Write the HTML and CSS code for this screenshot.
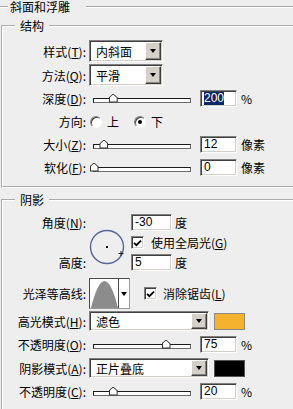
FILE: index.html
```html
<!DOCTYPE html>
<html lang="zh-CN">
<head>
  <meta charset="UTF-8" />
  <title>斜面和浮雕</title>
  <link rel="stylesheet" href="styles.css">
</head>
<body>
  <fieldset class="group outer">
    <legend>斜面和浮雕</legend>

    <fieldset class="group struct">
      <legend>结构</legend>
      <div class="row tall">
        <span class="lbl">样式(<u>T</u>):</span>
        <div class="select"><span>内斜面</span><i class="drop"></i></div>
      </div>
      <div class="row tall">
        <span class="lbl">方法(<u>Q</u>):</span>
        <div class="select"><span>平滑</span><i class="drop"></i></div>
      </div>
      <div class="row">
        <span class="lbl">深度(<u>D</u>):</span>
        <div class="slider"><div class="track"><i class="thumb" style="left: 20%"></i></div></div>
        <div class="field"><span class="hilite">200</span></div>
        <span class="unit">%</span>
      </div>
      <div class="row">
        <span class="lbl">方向:</span>
        <i class="radio"></i><span class="opt">上</span>
        <i class="radio on"></i><span class="opt">下</span>
      </div>
      <div class="row">
        <span class="lbl">大小(<u>Z</u>):</span>
        <div class="slider"><div class="track"><i class="thumb" style="left: 10.4%"></i></div></div>
        <div class="field">12</div>
        <span class="unit">像素</span>
      </div>
      <div class="row">
        <span class="lbl">软化(<u>F</u>):</span>
        <div class="slider"><div class="track"><i class="thumb" style="left: 0%"></i></div></div>
        <div class="field">0</div>
        <span class="unit">像素</span>
      </div>
    </fieldset>

    <fieldset class="group shade">
      <legend>阴影</legend>
      <div class="angle">
        <span class="lbl">角度(<u>N</u>):</span>
        <div class="cell"><div class="field num">-30</div><span class="deg">度</span></div>
        <svg class="dial" width="36" height="36" viewBox="0 0 36 36">
          <circle cx="18" cy="18" r="16.5" fill="none" stroke="#56659a" stroke-width="1.4"/>
          <rect x="17" y="17" width="2" height="2" fill="#000"/>
          <path d="M29.5 24.5h5M32 22v5" stroke="#222" stroke-width="1"/>
        </svg>
        <div class="cell">
          <i class="check"><svg width="9" height="8" viewBox="0 0 9 8"><path d="M1 3.8l2.4 2.4L8 1.6" fill="none" stroke="#000" stroke-width="1.8"/></svg></i>
          <span class="opt">使用全局光(<u>G</u>)</span>
        </div>
        <span class="lbl">高度:</span>
        <div class="cell"><div class="field num">5</div><span class="deg">度</span></div>
      </div>

      <div class="row gloss">
        <span class="lbl">光泽等高线:</span>
        <div class="contour">
          <svg width="28" height="29" viewBox="0 0 28 29"><path d="M1 29Q14.5 -25 28 29Z" fill="#8c8c8c"/></svg>
          <i class="arrow"></i>
        </div>
        <i class="check wide"><svg width="9" height="8" viewBox="0 0 9 8"><path d="M1 3.8l2.4 2.4L8 1.6" fill="none" stroke="#000" stroke-width="1.8"/></svg></i>
        <span class="opt">消除锯齿(<u>L</u>)</span>
      </div>
      <div class="row tall">
        <span class="lbl">高光模式(<u>H</u>):</span>
        <div class="select wide"><span>滤色</span><i class="drop"></i></div>
        <i class="swatch orange"></i>
      </div>
      <div class="row">
        <span class="lbl">不透明度(<u>O</u>):</span>
        <div class="slider"><div class="track"><i class="thumb" style="left: 75%"></i></div></div>
        <div class="field">75</div>
        <span class="unit">%</span>
      </div>
      <div class="row tall">
        <span class="lbl">阴影模式(<u>A</u>):</span>
        <div class="select wide"><span>正片叠底</span><i class="drop"></i></div>
        <i class="swatch black"></i>
      </div>
      <div class="row">
        <span class="lbl">不透明度(<u>C</u>):</span>
        <div class="slider"><div class="track"><i class="thumb" style="left: 20%"></i></div></div>
        <div class="field">20</div>
        <span class="unit">%</span>
      </div>
    </fieldset>
  </fieldset>
</body>
</html>
```

FILE: styles.css
```css
*, *::before, *::after {
  box-sizing: border-box;
  margin: 0;
  padding: 0;
}
html, body {
  background: #eeeeee;
  overflow: hidden;
}
body {
  width: 293px;
  height: 409px;
  font-family: "Noto Sans CJK SC", "Liberation Sans", sans-serif;
  font-size: 12px;
  line-height: 13px;
  color: #000;
}
u {
  text-decoration: underline;
  text-underline-offset: 1px;
}
i {
  display: block;
  flex: none;
}

/* group boxes */
.group {
  border: 2px groove #fff;
  min-width: 0;
}
.group legend {
  margin-left: 12px;
  padding: 0 5px;
  line-height: 13px;
}
.outer {
  margin-left: -2px;
  width: 320px;
  padding: 0;
}
.outer > legend {
  margin-left: 8px;
  padding: 0 16px 0 2px;
}
.struct {
  margin: 6px 0 0 1px;
  padding: 7px 0 7px 0;
}
.shade {
  margin: 5px 0 0 1px;
  padding: 8px 0 30px 0;
}

/* rows */
.row {
  display: flex;
  align-items: center;
  height: 23px;
}
.row.tall {
  height: 24px;
}
.lbl {
  width: 83px;
  margin-right: 3px;
  text-align: right;
  white-space: nowrap;
  flex: none;
}
.opt {
  margin-left: 6px;
  white-space: nowrap;
}
.unit {
  margin-left: 4px;
}

/* select boxes */
.select {
  display: flex;
  align-items: stretch;
  width: 74px;
  height: 22px;
  background: #fff;
  border: 1px solid;
  border-color: #808080 #fff #fff #808080;
  box-shadow: inset 1px 1px #404040, inset -1px -1px #d4d0c8;
  padding: 1px 1px 1px 6px;
  flex: none;
}
.select span {
  flex: 1;
  align-self: center;
}
.select.wide {
  width: 120px;
  height: 20px;
}
.drop {
  width: 16px;
  background: #d4d0c8;
  border: 1px solid;
  border-color: #fff #404040 #404040 #fff;
  box-shadow: inset -1px -1px #808080;
  display: flex;
  align-items: center;
  justify-content: center;
}
.drop::after, .arrow::after {
  content: '';
  border-left: 3.5px solid transparent;
  border-right: 3.5px solid transparent;
  border-top: 4px solid #000;
}

/* text fields */
.field {
  display: flex;
  align-items: center;
  width: 37px;
  height: 17px;
  margin-left: 5px;
  padding: 0 2px 0 3px;
  background: #fff;
  border: 1px solid;
  border-color: #808080 #fff #fff #808080;
  box-shadow: inset 1px 1px #404040, inset -1px -1px #d4d0c8;
  font-family: "Liberation Sans", sans-serif;
  font-size: 12px;
  flex: none;
}
.field.num {
  width: 41px;
  margin-left: 0;
}
.hilite {
  background: #0a246a;
  color: #fff;
  line-height: 13px;
}

/* sliders */
.slider {
  width: 106px;
  padding: 0 4px;
  margin-top: 3px;
  flex: none;
}
.track {
  position: relative;
  height: 5px;
  background: #fff;
  border: 1px solid #1c1c1c;
  border-right-color: #6a6a6a;
  border-bottom-color: #6a6a6a;
}
.thumb {
  position: absolute;
  top: -5px;
  width: 9px;
  height: 9px;
  margin-left: -4.5px;
  background: #333;
  clip-path: polygon(0 100%, 0 45%, 50% 0, 100% 45%, 100% 100%);
}
.thumb::before {
  content: '';
  position: absolute;
  left: 1px;
  top: 1px;
  right: 1px;
  bottom: 1px;
  background: #fff;
  clip-path: polygon(0 100%, 0 45%, 50% 0, 100% 45%, 100% 100%);
}

/* radios and checks */
.radio {
  width: 12px;
  height: 12px;
  margin-left: 1px;
  border-radius: 50%;
  background: #fff;
  border: 1px solid;
  border-color: #808080 #fff #fff #808080;
  box-shadow: inset 1px 1px #404040;
  position: relative;
}
.radio + .opt {
  margin-left: 5px;
  margin-right: 14px;
}
.radio.on::after {
  content: '';
  position: absolute;
  left: 3px;
  top: 3px;
  width: 4px;
  height: 4px;
  border-radius: 50%;
  background: #000;
}
.check {
  display: flex;
  align-items: center;
  justify-content: center;
  width: 13px;
  height: 13px;
  background: #fff;
  border: 1px solid;
  border-color: #808080 #fff #fff #808080;
  box-shadow: inset 1px 1px #404040, inset -1px -1px #d4d0c8;
}
.check.wide {
  margin-left: 14px;
}

/* angle block */
.angle {
  display: grid;
  grid-template-columns: 83px 36px auto;
  grid-template-rows: 17px 23px 17px;
  column-gap: 3px;
  align-items: center;
}
.angle .lbl {
  margin-right: 0;
}
.angle .cell {
  grid-column: 3;
  display: flex;
  align-items: center;
  padding-left: 3px;
}
.angle .cell .opt {
  margin-left: 7px;
}
.deg {
  margin-left: 3px;
}
.dial {
  grid-column: 2;
  grid-row: 2 / 4;
  align-self: start;
  margin-top: -2px;
}

/* gloss contour */
.gloss {
  margin-top: 7px;
  height: 31px;
}
.contour {
  display: flex;
  width: 41px;
  height: 31px;
  background: #fff;
  border: 1px solid #4a4a4a;
  border-right-color: #9a9a9a;
  border-bottom-color: #9a9a9a;
  flex: none;
}
.contour svg {
  display: block;
}
.arrow {
  width: 11px;
  border-left: 1px solid #4a4a4a;
  display: flex;
  align-items: center;
  justify-content: center;
}

/* colour swatches */
.swatch {
  width: 31px;
  height: 17px;
  margin-left: 5px;
  border: 1px solid #8a8a8a;
}
.swatch.orange {
  background: #f5b22e;
}
.swatch.black {
  background: #000;
  border-color: #555;
}
```
